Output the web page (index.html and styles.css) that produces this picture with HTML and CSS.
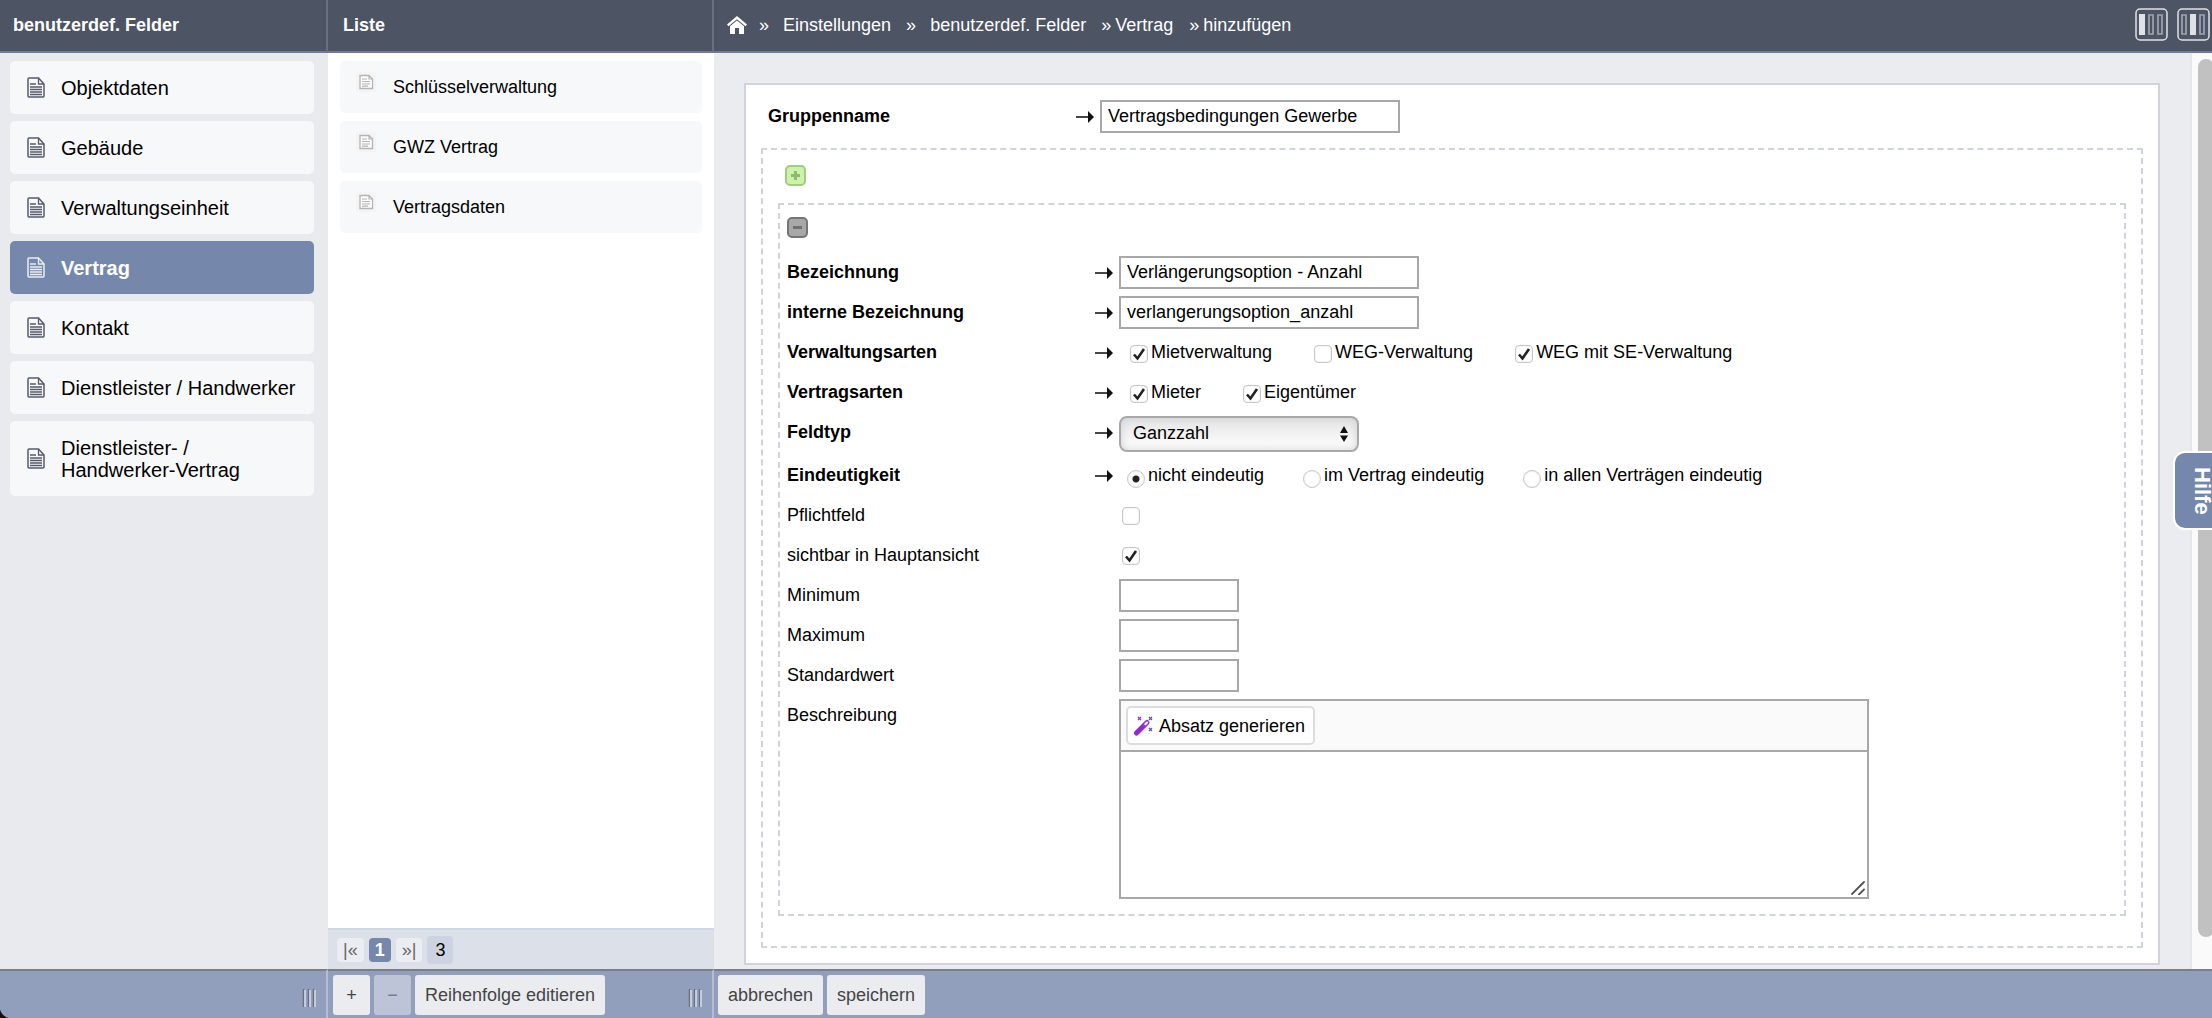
FILE: index.html
```html
<!DOCTYPE html>
<html lang="de">
<head>
<meta charset="utf-8">
<title>benutzerdef. Felder</title>
<link rel="stylesheet" href="styles.css">
</head>
<body>
<svg class="defs" aria-hidden="true">
  <symbol id="doc" viewBox="0 0 18 21">
    <path d="M2 1H11.500L17 7V19Q17 20 16 20H2Q1 20 1 19V2Q1 1 2 1Z" fill="none" stroke="currentColor" stroke-width="1.500"/>
    <path d="M11.500 1V7H17M3 7H9M3 10H15M3 12.500H15M3 15H15M3 17.500H15" fill="none" stroke="currentColor" stroke-width="1.300"/>
  </symbol>
  <symbol id="doc-small" viewBox="0 0 20 20">
    <path d="M0 0H20V20H0Z" fill="#f4f4f4"/>
    <path d="M4 3.500H13L16.500 7V16.500H4Z" fill="#fdfdfd" stroke="#b4b4b4" stroke-width="1.300"/>
    <path d="M13 3.500V7H16.500M6 7H11M6 9.500H14M6 12H14M6 14.200H12" fill="none" stroke="#b4b4b4" stroke-width="1.200"/>
  </symbol>
  <symbol id="arrow" viewBox="0 0 18 12">
    <path d="M0 6H13" stroke="#333" stroke-width="1.800"/>
    <path d="M12 0L18 6L12 12Z" fill="#111"/>
  </symbol>
  <symbol id="grip" viewBox="0 0 14 18">
    <path d="M1.500 0V18M6.500 0V18M11.500 0V18" stroke="#6b7080" stroke-width="1.500"/>
    <path d="M3 1V18M8 1V18M13 1V18" stroke="#e4e7ee" stroke-width="1.300"/>
  </symbol>
</svg>

<div class="app">
  <section class="col">
    <header class="bar"><h2 class="bar-title">benutzerdef. Felder</h2></header>
    <nav class="menu">
      <a class="menu-item" href="#"><svg class="doc"><use href="#doc"/></svg>Objektdaten</a>
      <a class="menu-item" href="#"><svg class="doc"><use href="#doc"/></svg>Gebäude</a>
      <a class="menu-item" href="#"><svg class="doc"><use href="#doc"/></svg>Verwaltungseinheit</a>
      <a class="menu-item active" href="#"><svg class="doc"><use href="#doc"/></svg>Vertrag</a>
      <a class="menu-item" href="#"><svg class="doc"><use href="#doc"/></svg>Kontakt</a>
      <a class="menu-item" href="#"><svg class="doc"><use href="#doc"/></svg>Dienstleister / Handwerker</a>
      <a class="menu-item" href="#"><svg class="doc"><use href="#doc"/></svg><span>Dienstleister- /<br>Handwerker-Vertrag</span></a>
    </nav>
    <footer class="foot foot-first"><svg class="grip"><use href="#grip"/></svg></footer>
  </section>

  <section class="col">
    <header class="bar bar-list"><h2 class="bar-title">Liste</h2></header>
    <div class="list">
      <a class="list-item" href="#"><svg class="doc-small"><use href="#doc-small"/></svg>Schlüsselverwaltung</a>
      <a class="list-item" href="#"><svg class="doc-small"><use href="#doc-small"/></svg>GWZ Vertrag</a>
      <a class="list-item" href="#"><svg class="doc-small"><use href="#doc-small"/></svg>Vertragsdaten</a>
    </div>
    <div class="pager">
      <button class="page" type="button">|«</button>
      <button class="page current" type="button">1</button>
      <button class="page" type="button">»|</button>
      <span class="total">3</span>
    </div>
    <footer class="foot">
      <button class="btn btn-sign" type="button">+</button>
      <button class="btn btn-sign" type="button" disabled>−</button>
      <button class="btn" type="button">Reihenfolge editieren</button>
      <svg class="grip"><use href="#grip"/></svg>
    </footer>
  </section>

  <section class="col">
    <header class="bar bar-last">
      <nav class="crumbs">
        <a href="#" aria-label="Start"><svg class="home" viewBox="0 0 20 18"><path d="M10 0L20 8.500L18.500 10.200L10 3.200L1.500 10.200L0 8.500Z" fill="#fff"/><path d="M10 4.600L17 10.300V18H12V12H8V18H3V10.300Z" fill="#fff"/></svg></a>
        <span class="sep-wide">»</span><a href="#">Einstellungen</a>
        <span class="sep-wide">»</span><a href="#">benutzerdef. Felder</a>
        <span class="sep">»</span><a href="#">Vertrag</a>
        <span class="sep">»</span><span>hinzufügen</span>
      </nav>
      <div class="views">
        <button class="view" type="button" aria-label="Ansicht links"><svg viewBox="0 0 33 33"><rect x="1" y="1" width="31" height="31" rx="4" fill="none" stroke="#dfe1e5" stroke-width="1.500"/><path d="M4 6H10V27H4Z" fill="#dfe1e5"/><path d="M14 7H18V26H14ZM23 7H27V26H23Z" fill="none" stroke="#9fa4b0" stroke-width="1.700"/></svg></button>
        <button class="view" type="button" aria-label="Ansicht Mitte"><svg viewBox="0 0 33 33"><rect x="1" y="1" width="31" height="31" rx="4" fill="none" stroke="#dfe1e5" stroke-width="1.500"/><path d="M13 6H19V27H13Z" fill="#dfe1e5"/><path d="M5 7H9V26H5ZM23 7H27V26H23Z" fill="none" stroke="#9fa4b0" stroke-width="1.700"/></svg></button>
      </div>
    </header>

    <div class="work">
      <main class="canvas">
        <form class="card">
          <div class="row row-head">
            <label class="label strong" for="gruppe">Gruppenname</label>
            <svg class="arrow"><use href="#arrow"/></svg>
            <input class="text" id="gruppe" value="Vertragsbedingungen Gewerbe">
          </div>
          <div class="group">
            <button class="sq" type="button" aria-label="Feld hinzufügen"><svg viewBox="0 0 21 21"><rect x="1" y="1" width="19" height="19" rx="4" fill="#cdf3a8" stroke="#9fcd82" stroke-width="2"/><path d="M10.500 6V15M6 10.500H15" stroke="#8fb878" stroke-width="3"/></svg></button>
            <div class="field">
              <button class="sq sq-remove" type="button" aria-label="Feld entfernen"><svg viewBox="0 0 21 21"><rect x="1" y="1" width="19" height="19" rx="4" fill="#a8a8a8" stroke="#757575" stroke-width="2"/><path d="M6 10.500H15" stroke="#707070" stroke-width="3"/></svg></button>
              <div class="rows">
                <div class="row">
                  <label class="label strong" for="bez">Bezeichnung</label>
                  <svg class="arrow"><use href="#arrow"/></svg>
                  <input class="text" id="bez" value="Verlängerungsoption - Anzahl">
                </div>
                <div class="row">
                  <label class="label strong" for="ibez">interne Bezeichnung</label>
                  <svg class="arrow"><use href="#arrow"/></svg>
                  <input class="text" id="ibez" value="verlangerungsoption_anzahl">
                </div>
                <div class="row">
                  <span class="label strong">Verwaltungsarten</span>
                  <svg class="arrow"><use href="#arrow"/></svg>
                  <div class="options">
                    <label class="option"><input class="check" type="checkbox" checked>Mietverwaltung</label>
                    <label class="option"><input class="check" type="checkbox">WEG-Verwaltung</label>
                    <label class="option"><input class="check" type="checkbox" checked>WEG mit SE-Verwaltung</label>
                  </div>
                </div>
                <div class="row">
                  <span class="label strong">Vertragsarten</span>
                  <svg class="arrow"><use href="#arrow"/></svg>
                  <div class="options">
                    <label class="option"><input class="check" type="checkbox" checked>Mieter</label>
                    <label class="option"><input class="check" type="checkbox" checked>Eigentümer</label>
                  </div>
                </div>
                <div class="row">
                  <label class="label strong" for="typ">Feldtyp</label>
                  <svg class="arrow"><use href="#arrow"/></svg>
                  <div class="select-wrap">
                    <select class="select" id="typ"><option>Ganzzahl</option></select>
                    <svg class="updown" viewBox="0 0 8 16"><path d="M4 0L8 7H0ZM4 16L0 9.500H8Z" fill="#111"/></svg>
                  </div>
                </div>
                <div class="row">
                  <span class="label strong">Eindeutigkeit</span>
                  <svg class="arrow"><use href="#arrow"/></svg>
                  <div class="options options-radio">
                    <label class="option"><input class="radio" type="radio" name="eind" checked>nicht eindeutig</label>
                    <label class="option"><input class="radio" type="radio" name="eind">im Vertrag eindeutig</label>
                    <label class="option"><input class="radio" type="radio" name="eind">in allen Verträgen eindeutig</label>
                  </div>
                </div>
                <div class="row">
                  <label class="label" for="pflicht">Pflichtfeld</label>
                  <input class="check check-single" type="checkbox" id="pflicht">
                </div>
                <div class="row">
                  <label class="label" for="sicht">sichtbar in Hauptansicht</label>
                  <input class="check check-single" type="checkbox" id="sicht" checked>
                </div>
                <div class="row">
                  <label class="label" for="min">Minimum</label>
                  <input class="text text-short" id="min">
                </div>
                <div class="row">
                  <label class="label" for="max">Maximum</label>
                  <input class="text text-short" id="max">
                </div>
                <div class="row">
                  <label class="label" for="std">Standardwert</label>
                  <input class="text text-short" id="std">
                </div>
                <div class="row">
                  <label class="label" for="beschr">Beschreibung</label>
                  <div class="editor">
                    <div class="tools">
                      <button class="generate" type="button"><svg class="wand" viewBox="0 0 20 20"><path d="M3.500 17L11 9.500" stroke="#9127d6" stroke-width="5" stroke-linecap="round"/><path d="M11.500 9L14 6.500" stroke="#8d35dd" stroke-width="5" stroke-linecap="round"/><path d="M12.300 8.200L14 6.500" stroke="#fff" stroke-width="2" stroke-linecap="round"/><path d="M5 1L8 4M8 1L5 4" stroke="#a52ed0" stroke-width="1.300"/><path d="M16 1L19 4M19 1L16 4M16 12L19 15M19 12L16 15" stroke="#6a4fa5" stroke-width="1.300"/></svg>Absatz generieren</button>
                    </div>
                    <textarea class="area" id="beschr"></textarea>
                    <svg class="resize" viewBox="0 0 14 14"><path d="M1 13L13 1M8 13.500L13 8.500" stroke="#555" stroke-width="1.800" stroke-linecap="round"/></svg>
                  </div>
                </div>
              </div>
            </div>
          </div>
        </form>
      </main>
      <div class="track"><div class="thumb"></div></div>
    </div>

    <footer class="foot foot-last">
      <button class="btn" type="button">abbrechen</button>
      <button class="btn" type="button">speichern</button>
    </footer>
  </section>
</div>
<button class="help" type="button">Hilfe</button>
</body>
</html>
```
FILE: styles.css
```css
* { box-sizing: border-box; }

body {
  margin: 0;
  overflow: hidden;
  font: 18px/20px "Liberation Sans", Arial, sans-serif;
  color: #000;
  background: #ebecf0;
}

a { color: inherit; text-decoration: none; }
button, input, select, textarea { font: inherit; color: inherit; margin: 0; }
button { cursor: pointer; }
svg { display: block; flex: none; }
.defs { position: absolute; width: 0; height: 0; }

.app {
  display: grid;
  grid-template-columns: 328px 386px minmax(0, 1fr);
  height: 100vh;
}
.col { display: flex; flex-direction: column; min-height: 0; min-width: 0; }

/* top bar */
.bar {
  flex: none;
  display: flex;
  align-items: center;
  height: 53px;
  padding: 0 14px 2px 13px;
  background: #4d5463;
  border-bottom: 2px solid #6f7b98;
  border-right: 2px solid #696f7e;
  color: #fff;
}
.bar-list { padding-left: 15px; }
.bar-last { border-right: 0; padding-right: 2px; }
.bar-title { margin: 0; font-size: 18px; font-weight: bold; }
.crumbs { flex: 1; display: flex; align-items: center; white-space: pre; }
.home { width: 20px; height: 18px; }
.sep-wide { padding: 0 14px 0 12px; }
.sep-wide + a { padding-right: 3px; }
.sep { padding: 0 4px 0 12px; }
.sep + a { padding-right: 4px; }
.views { display: flex; gap: 9px; }
.view { width: 33px; height: 33px; padding: 0; border: 0; background: none; }

/* left menu */
.menu {
  flex: 1;
  display: flex;
  flex-direction: column;
  gap: 7px;
  padding: 8px 14px 0 10px;
  background: #e8eaed;
  font-size: 20px;
  line-height: 22px;
}
.menu-item {
  display: flex;
  align-items: center;
  gap: 16px;
  min-height: 53px;
  padding: 15px 0 15px 17px;
  border-radius: 5px;
  background: #f7f8fa;
  white-space: nowrap;
}
.menu-item:last-child { min-height: 75px; }
.menu-item.active { background: #7588ab; color: #fff; font-weight: bold; }
.doc { width: 18px; height: 21px; color: #555b6b; }
.active .doc { color: #e9edf5; }

/* list column */
.list {
  flex: 1;
  display: flex;
  flex-direction: column;
  gap: 8px;
  padding: 8px 12px 0;
  background: #fff;
}
.list-item {
  display: flex;
  align-items: center;
  gap: 17px;
  height: 52px;
  padding-left: 16px;
  border-radius: 5px;
  background: #f7f8fa;
}
.doc-small { width: 20px; height: 20px; margin-bottom: 10px; }

.pager {
  display: flex;
  align-items: center;
  gap: 5px;
  height: 41px;
  padding-left: 9px;
  background: #dce0e9;
  border-top: 2px solid #cfd7e5;
}
.page {
  height: 24px;
  padding: 0 6px;
  border: 0;
  border-radius: 4px;
  background: #ebedf3;
  color: #666;
}
.page.current { background: #7588ab; color: #fff; font-weight: bold; }
.total { padding: 4px 8px; border-radius: 4px; background: #cdd3e1; }

/* bottom bar */
.foot {
  flex: none;
  display: flex;
  align-items: center;
  gap: 4px;
  height: 49px;
  padding: 0 10px 0 5px;
  background: #919ebc;
  border-top: 2px solid #7b7f88;
  border-right: 2px solid #b4bdd1;
}
/* dark window corner */
.foot-first {
  background: radial-gradient(circle at 12px 0, #919ebc 12px, #111 13px) 0 100% / 12px 12px no-repeat #919ebc;
}
.foot-last { border-right: 0; padding-left: 4px; }
.grip { width: 14px; height: 18px; margin-left: auto; margin-top: 6px; }
.btn {
  height: 40px;
  padding: 0 10px;
  border: 0;
  border-radius: 3px;
  background: #ebecf0;
  color: #444;
}
.btn-sign { width: 37px; }
.btn:disabled { background: #bdc4d7; color: #777e90; }

/* work area */
.work { flex: 1; display: flex; min-height: 0; }
.canvas { flex: 1; min-width: 0; overflow: hidden; padding: 30px 30px 0; }
.track {
  width: 22px;
  padding: 6px 0 32px 6px;
  background: #fafafa;
  border-left: 2px solid #e6e6e6;
  overflow: hidden;
}
.thumb { width: 16px; height: 100%; border-radius: 8px; background: #c1c1c1; }

.card { padding: 15px; background: #fff; border: 2px solid #d1d3dc; }
.group { padding: 15px 15px 30px; border: 2px dashed #d1d3dc; }
.field { margin-top: 17px; padding: 12px 6px 15px; border: 2px dashed #d1d3dc; }
.sq { display: block; width: 21px; height: 21px; margin-left: 7px; padding: 0; border: 0; background: none; }
.sq-remove { margin: 0 0 18px 1px; }

.rows { display: flex; flex-direction: column; gap: 7px; }
.row {
  display: grid;
  grid-template-columns: 309px 24px minmax(0, 1fr);
  align-items: start;
}
.row-head { padding: 0 6px 15px; }
.row > :last-child { grid-column: 3; }
.label { padding-left: 1px; line-height: 33px; }
.strong { font-weight: bold; }
.arrow { width: 18px; height: 12px; margin-top: 11px; }

.text {
  width: 300px;
  height: 33px;
  padding: 0 6px 1px;
  border: 2px solid #a8a8a8;
  border-radius: 0;
  background: #fff;
  outline: 0;
}
.text-short { width: 120px; }

.options { display: flex; gap: 42px; padding-left: 11px; }
.options-radio { gap: 39px; padding-left: 8px; }
.option { display: flex; gap: 3px; line-height: 33px; white-space: nowrap; }
.check, .radio {
  appearance: none;
  flex: none;
  width: 18px;
  height: 18px;
  margin-top: 9px;
  border: 1px solid #c8c8c8;
  border-radius: 4px;
  background: #fff center / 16px 16px no-repeat;
  box-shadow: inset 0 0 2px #ddd;
}
.check:checked {
  background-image: url("data:image/svg+xml,%3Csvg xmlns='http://www.w3.org/2000/svg' viewBox='0 0 16 16'%3E%3Cpath d='M3 8.500L6.500 12.500L13 3' fill='none' stroke='%23222' stroke-width='2.600'/%3E%3C/svg%3E");
}
.check-single { margin: 8px 0 0 3px; }
.radio { margin-top: 11px; border-radius: 9px; }
.radio:checked { background-image: radial-gradient(circle, #222 0 3px, transparent 4px); }

.select-wrap { position: relative; width: 240px; }
.select {
  display: block;
  appearance: none;
  width: 100%;
  height: 36px;
  padding: 0 12px 2px;
  border: 2px solid #a8a8a8;
  border-radius: 8px;
  background: linear-gradient(#e4e4e4, #fff);
  box-shadow: inset 0 0 8px #d0d0d0;
}
.updown { position: absolute; right: 11px; top: 10px; width: 8px; height: 16px; pointer-events: none; }

.editor { position: relative; width: 750px; max-width: 100%; height: 200px; display: flex; flex-direction: column; border: 2px solid #a8a8a8; }
.tools { padding: 5px; background: #fafafa; border-bottom: 2px solid #a8a8a8; }
.generate {
  display: flex;
  align-items: center;
  gap: 6px;
  height: 39px;
  padding: 0 8px 0 5px;
  border: 2px solid #ddd;
  border-radius: 5px;
  background: #fff;
}
.wand { width: 20px; height: 20px; }
.area { flex: 1; width: 100%; border: 0; outline: 0; resize: none; padding: 6px; }
.resize { position: absolute; right: 2px; bottom: 2px; width: 14px; height: 14px; }

.help {
  position: fixed;
  top: 451px;
  right: -6px;
  width: 45px;
  height: 79px;
  padding: 0 0 0 12px;
  border: 2px solid #fff;
  border-radius: 12px 0 0 12px;
  background: #7588ab;
  color: #fff;
  font-size: 22px;
  font-weight: bold;
  line-height: 28px;
  writing-mode: vertical-rl;
}
```
